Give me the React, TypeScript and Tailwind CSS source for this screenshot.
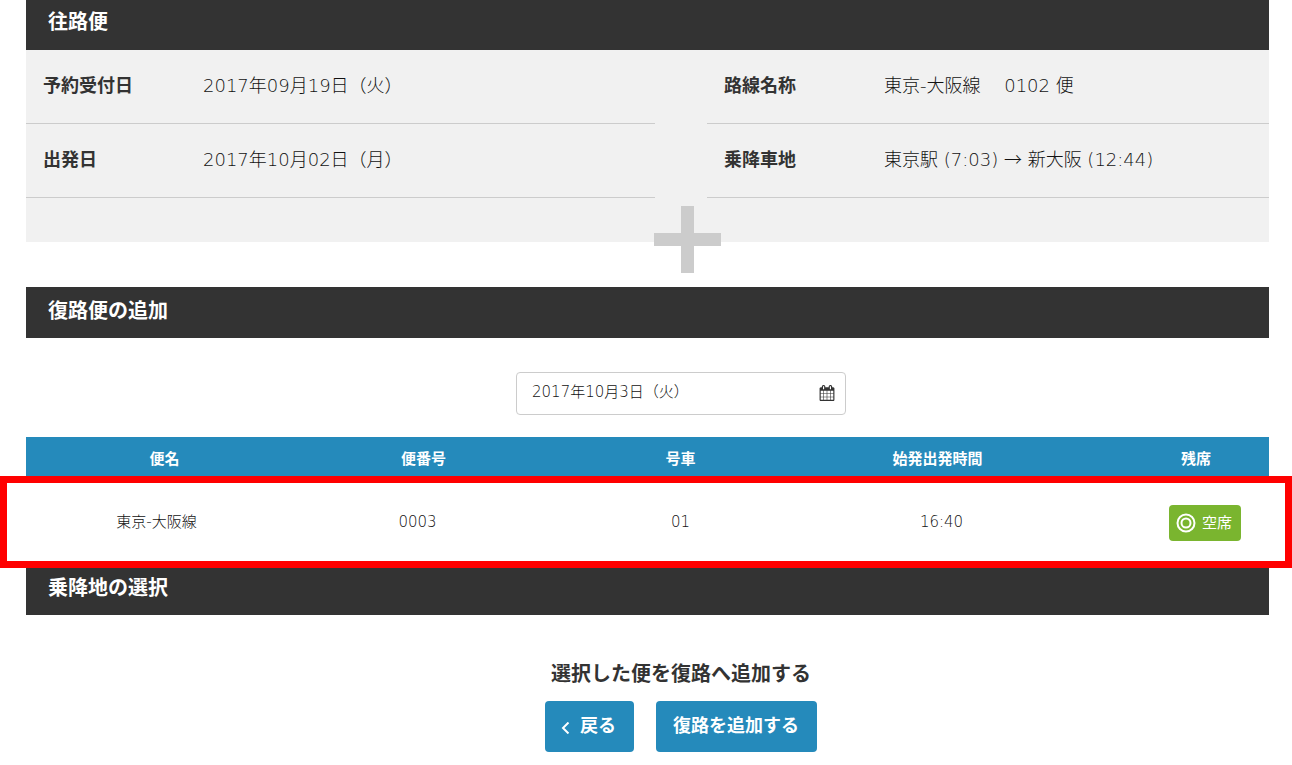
import React, { useState } from 'react';

interface Detail {
  label: string;
  value: React.ReactNode;
}

const leftDetails: Detail[] = [
  { label: '予約受付日', value: '2017年09月19日（火）' },
  { label: '出発日', value: '2017年10月02日（月）' },
];

const rightDetails: Detail[] = [
  { label: '路線名称', value: '東京-大阪線　 0102 便' },
  {
    label: '乗降車地',
    value: (
      <>
        東京駅 (7:03) <span className="font-['Noto_Sans_CJK_JP',sans-serif] leading-none">→</span> 新大阪 (12:44)
      </>
    ),
  },
];

const trips = [{ name: '東京-大阪線', number: '0003', car: '01', departure: '16:40' }];

function SectionTitle({ children }: { children: React.ReactNode }) {
  return (
    <h2 className="bg-[#333] px-[22px] pt-[9px] pb-3 text-xl leading-[30px] font-bold text-white">
      {children}
    </h2>
  );
}

function DetailList({ items }: { items: Detail[] }) {
  return (
    <dl>
      {items.map((item) => (
        <div key={item.label} className="flex h-[74px] border-b border-[#ccc] px-[17px] pt-6 text-lg leading-6">
          <dt className="w-40 shrink-0 font-bold">{item.label}</dt>
          <dd className="font-light whitespace-nowrap text-[#111]">{item.value}</dd>
        </div>
      ))}
    </dl>
  );
}

function CalendarIcon() {
  return (
    <svg className="h-4 w-4" viewBox="0 0 1792 1792" fill="currentColor" aria-hidden="true">
      <path d="M192 1664h288v-288h-288v288zm352 0h320v-288h-320v288zm-352-352h288v-320h-288v320zm352 0h320v-320h-320v320zm-352-384h288v-288h-288v288zm736 736h320v-288h-320v288zm-384-736h320v-288h-320v288zm768 736h288v-288h-288v288zm-384-352h320v-320h-320v320zm-352-864v-288q0-13-9.5-22.5t-22.5-9.5h-64q-13 0-22.5 9.5t-9.5 22.5v288q0 13 9.5 22.5t22.5 9.5h64q13 0 22.5-9.5t9.5-22.5zm736 864h288v-320h-288v320zm-384-384h320v-288h-320v288zm384 0h288v-288h-288v288zm32-480v-288q0-13-9.5-22.5t-22.5-9.5h-64q-13 0-22.5 9.5t-9.5 22.5v288q0 13 9.5 22.5t22.5 9.5h64q13 0 22.5-9.5t9.5-22.5zm384-64v1280q0 52-38 90t-90 38h-1408q-52 0-90-38t-38-90v-1280q0-52 38-90t90-38h128v-96q0-66 47-113t113-47h64q66 0 113 47t47 113v96h384v-96q0-66 47-113t113-47h64q66 0 113 47t47 113v96h128q52 0 90 38t38 90z" />
    </svg>
  );
}

export default function App() {
  const [date, setDate] = useState('2017年10月3日（火）');

  return (
    <main className="bg-white pr-[23px] pl-[26px] font-['DejaVu_Sans','Noto_Sans_CJK_JP',sans-serif] text-[#333]">
      <section className="relative bg-[#f1f1f1] pb-11">
        <h2 className="bg-[#333] px-[22px] pt-[7px] pb-[13px] text-xl leading-[30px] font-bold text-white">往路便</h2>
        <div className="grid grid-cols-[629fr_562fr] gap-x-[52px]">
          <DetailList items={leftDetails} />
          <DetailList items={rightDetails} />
        </div>
        <svg
          className="absolute -bottom-[31px] left-[53%] h-[67px] w-[67px] -translate-x-[31px]"
          viewBox="0 0 67 67"
          fill="#ccc"
          aria-hidden="true"
        >
          <path d="M27 0h13v27h27v13H40v27H27V40H0V27h27z" />
        </svg>
      </section>

      <section className="pt-[45px]">
        <SectionTitle>復路便の追加</SectionTitle>
        <div className="flex justify-center pt-[34px] pb-[22px] pl-[67px]">
          <label className="flex h-[43px] w-[330px] items-center rounded border border-[#ccc] pr-[10px] pb-px pl-[15px]">
            <input
              type="text"
              aria-label="出発日"
              value={date}
              onChange={(e) => setDate(e.target.value)}
              className="min-w-0 flex-1 pb-[3px] text-[15px] leading-6 font-light text-[#111] outline-none"
            />
            <CalendarIcon />
          </label>
        </div>

        <div className="relative">
          <table className="w-full table-fixed text-center text-[15px] leading-6">
            <colgroup>
              <col className="w-[21%]" />
              <col className="w-[21%]" />
              <col className="w-[21%]" />
              <col className="w-[21%]" />
              <col className="w-[16%]" />
            </colgroup>
            <thead className="bg-[#258abb] text-white">
              <tr className="h-[39px]">
                <th className="pt-1 pl-4">便名</th>
                <th className="pt-1 pl-3">便番号</th>
                <th className="pt-1 pl-1">号車</th>
                <th className="pt-1 pr-1">始発出発時間</th>
                <th className="pt-1 pr-[58px] text-right">残席</th>
              </tr>
            </thead>
            <tbody className="text-[#111]">
              {trips.map((trip) => (
                <tr key={trip.number} className="h-[88px] font-light">
                  <td className="pt-1">{trip.name}</td>
                  <td className="pt-1">{trip.number}</td>
                  <td className="pt-1 pl-1">{trip.car}</td>
                  <td className="pt-1 pl-1">{trip.departure}</td>
                  <td className="pt-[6px] pr-7">
                    <button
                      type="button"
                      className="ml-auto flex h-9 w-[72px] items-center justify-center gap-[6px] rounded bg-[#7ab52f] pr-[2px] font-normal text-white"
                    >
                      <svg className="h-5 w-5" viewBox="0 0 20 20" fill="none" stroke="currentColor" strokeWidth="2" aria-hidden="true">
                        <circle cx="10" cy="10" r="8.5" />
                        <circle cx="10" cy="10" r="4.5" />
                      </svg>
                      空席
                    </button>
                  </td>
                </tr>
              ))}
            </tbody>
          </table>
          {/* highlight around the selectable trip */}
          <div className="pointer-events-none absolute top-[39px] -right-[23px] -bottom-1 -left-[26px] border-[7px] border-[#f00]" />
        </div>
      </section>

      <section>
        <SectionTitle>乗降地の選択</SectionTitle>
        <div className="flex flex-col items-center pt-[45px] pb-3 pl-[67px]">
          <p className="text-xl leading-7 font-bold">選択した便を復路へ追加する</p>
          <div className="mt-[13px] flex gap-[22px] text-lg leading-6 font-bold text-white">
            <button type="button" className="flex h-[51px] items-center gap-[10px] rounded bg-[#258abb] pr-[18px] pb-[2px] pl-4">
              <svg className="mt-1 h-3 w-[9px]" viewBox="0 0 9 12" fill="none" stroke="currentColor" strokeWidth="2" aria-hidden="true">
                <path d="M7.5 0.5L2 6l5.5 5.5" />
              </svg>
              戻る
            </button>
            <button type="button" className="h-[51px] rounded bg-[#258abb] pr-[18px] pb-[2px] pl-[17px]">
              復路を追加する
            </button>
          </div>
        </div>
      </section>
    </main>
  );
}
